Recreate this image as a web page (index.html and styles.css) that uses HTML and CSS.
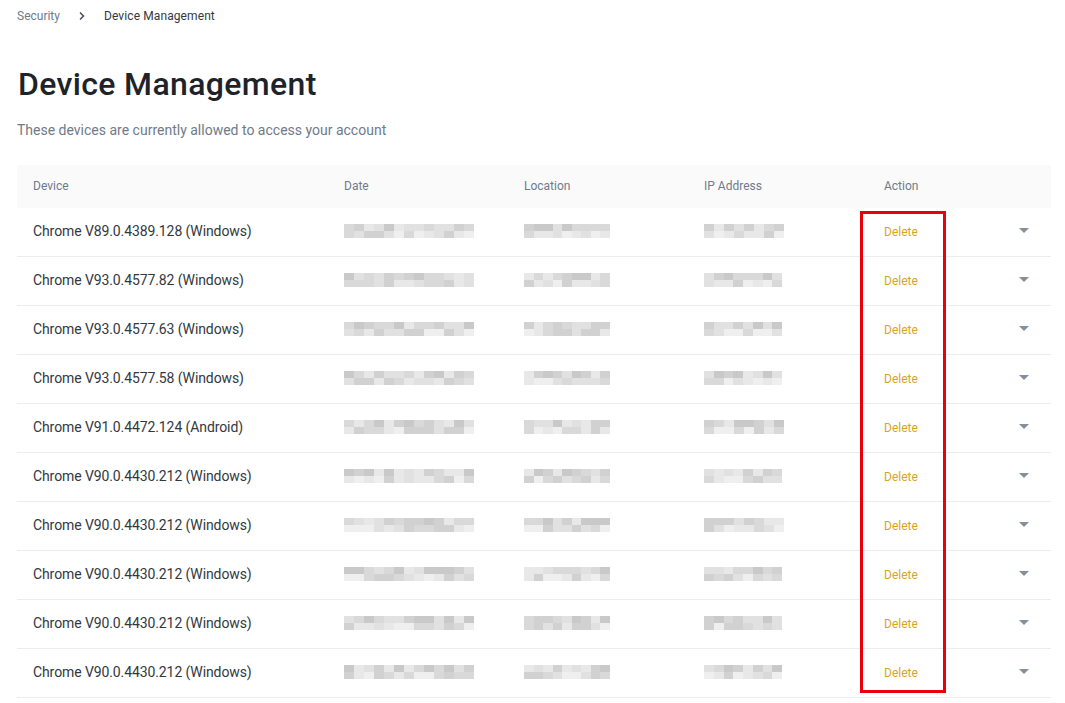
FILE: index.html
```html
<!DOCTYPE html>
<html lang="en">
<head>
<meta charset="utf-8">
<title>Device Management</title>
<link rel="stylesheet" href="styles.css">
</head>
<body>
<div class="page">
  <nav class="crumbs">
    <span class="crumb-link">Security</span>
    <svg class="crumb-sep" width="8" height="10" viewBox="0 0 8 10"><path d="M2 1.5 L5.5 5 L2 8.5" fill="none" stroke="#474d57" stroke-width="1.5"/></svg>
    <span class="crumb-current">Device Management</span>
  </nav>
  <h1 class="title">Device Management</h1>
  <p class="subtitle">These devices are currently allowed to access your account</p>

  <div class="table">
    <div class="row head">
      <div>Device</div><div>Date</div><div>Location</div><div>IP Address</div><div>Action</div><div></div>
    </div>
    <div class="row"><div class="device">Chrome V89.0.4389.128 (Windows)</div><div><span class="blur" data-w="130" data-s="1"></span></div><div><span class="blur" data-w="86" data-s="2"></span></div><div><span class="blur" data-w="80" data-s="3"></span></div><div><span class="del">Delete</span></div><div class="caret-cell"><span class="caret"></span></div></div>
    <div class="row"><div class="device">Chrome V93.0.4577.82 (Windows)</div><div><span class="blur" data-w="130" data-s="4"></span></div><div><span class="blur" data-w="86" data-s="5"></span></div><div><span class="blur" data-w="78" data-s="6"></span></div><div><span class="del">Delete</span></div><div class="caret-cell"><span class="caret"></span></div></div>
    <div class="row"><div class="device">Chrome V93.0.4577.63 (Windows)</div><div><span class="blur" data-w="130" data-s="7"></span></div><div><span class="blur" data-w="86" data-s="8"></span></div><div><span class="blur" data-w="78" data-s="9"></span></div><div><span class="del">Delete</span></div><div class="caret-cell"><span class="caret"></span></div></div>
    <div class="row"><div class="device">Chrome V93.0.4577.58 (Windows)</div><div><span class="blur" data-w="130" data-s="10"></span></div><div><span class="blur" data-w="86" data-s="11"></span></div><div><span class="blur" data-w="78" data-s="12"></span></div><div><span class="del">Delete</span></div><div class="caret-cell"><span class="caret"></span></div></div>
    <div class="row"><div class="device">Chrome V91.0.4472.124 (Android)</div><div><span class="blur" data-w="130" data-s="13"></span></div><div><span class="blur" data-w="86" data-s="14"></span></div><div><span class="blur" data-w="80" data-s="15"></span></div><div><span class="del">Delete</span></div><div class="caret-cell"><span class="caret"></span></div></div>
    <div class="row"><div class="device">Chrome V90.0.4430.212 (Windows)</div><div><span class="blur" data-w="130" data-s="16"></span></div><div><span class="blur" data-w="86" data-s="17"></span></div><div><span class="blur" data-w="78" data-s="18"></span></div><div><span class="del">Delete</span></div><div class="caret-cell"><span class="caret"></span></div></div>
    <div class="row"><div class="device">Chrome V90.0.4430.212 (Windows)</div><div><span class="blur" data-w="130" data-s="19"></span></div><div><span class="blur" data-w="86" data-s="20"></span></div><div><span class="blur" data-w="80" data-s="21"></span></div><div><span class="del">Delete</span></div><div class="caret-cell"><span class="caret"></span></div></div>
    <div class="row"><div class="device">Chrome V90.0.4430.212 (Windows)</div><div><span class="blur" data-w="130" data-s="22"></span></div><div><span class="blur" data-w="86" data-s="23"></span></div><div><span class="blur" data-w="78" data-s="24"></span></div><div><span class="del">Delete</span></div><div class="caret-cell"><span class="caret"></span></div></div>
    <div class="row"><div class="device">Chrome V90.0.4430.212 (Windows)</div><div><span class="blur" data-w="130" data-s="25"></span></div><div><span class="blur" data-w="86" data-s="26"></span></div><div><span class="blur" data-w="78" data-s="27"></span></div><div><span class="del">Delete</span></div><div class="caret-cell"><span class="caret"></span></div></div>
    <div class="row"><div class="device">Chrome V90.0.4430.212 (Windows)</div><div><span class="blur" data-w="130" data-s="28"></span></div><div><span class="blur" data-w="86" data-s="29"></span></div><div><span class="blur" data-w="78" data-s="30"></span></div><div><span class="del">Delete</span></div><div class="caret-cell"><span class="caret"></span></div></div>
    <div class="highlight"></div>
  </div>
</div>
<script src="script.js"></script>
</body>
</html>
```

FILE: styles.css
```css
* { box-sizing: border-box; }
html, body { margin: 0; padding: 0; background: #ffffff; }
body {
  font-family: Roboto, "Liberation Sans", Arial, sans-serif;
  color: #1e2329;
}
.page {
  padding: 0 14px 0 17px;
}
.crumbs {
  height: 32px;
  display: flex;
  align-items: center;
  font-size: 12px;
}
.crumb-link { color: #707a8a; }
.crumb-sep { margin: 0 18px 0 18px; }
.crumb-current { color: #333840; letter-spacing: 0.1px; }

.title {
  margin: 32px 0 0 1px;
  font-size: 32px;
  line-height: 40px;
  font-weight: 500;
  letter-spacing: 0.35px;
  color: #1e2329;
}
.subtitle {
  margin: 16px 0 0;
  font-size: 14px;
  line-height: 20px;
  color: #707a8a;
}

.table {
  position: relative;
  margin-top: 25px;
}
.row {
  display: grid;
  grid-template-columns: 311px 180px 180px 180px 1fr 22px;
  align-items: center;
  padding: 0 16px 3px;
  height: 49px;
  border-bottom: 1px solid #eaecef;
  font-size: 14px;
}
.row.head {
  height: 43px;
  padding-bottom: 2px;
  background: #fafafa;
  border-bottom: none;
  font-size: 12px;
  color: #707a8a;
}
.device {
  color: #333840;
  letter-spacing: -0.1px;
}
.del {
  font-size: 12px;
  color: #d9a41e;
}
.caret-cell {
  display: flex;
  justify-content: center;
}
.caret {
  width: 0;
  height: 0;
  border-left: 5px solid transparent;
  border-right: 5px solid transparent;
  border-top: 5px solid #848e9c;
}
.blur {
  display: grid;
  grid-auto-rows: 7px;
  margin-top: 1px;
}
.blur i { display: block; }

.highlight {
  position: absolute;
  top: 46px;
  left: 843px;
  width: 86px;
  height: 482px;
  border: 3px solid #e8000b;
  pointer-events: none;
}
```

FILE: script.js
```js
(function () {
  function rng(seed) {
    var s = seed * 9301 + 49297;
    return function () {
      s = (s * 9301 + 49297) % 233280;
      return s / 233280;
    };
  }
  var shades = ['#c9c9c9', '#d1d1d1', '#d9d9d9', '#e1e1e1', '#e8e8e8', '#efefef', '#f5f5f5'];
  document.querySelectorAll('.blur').forEach(function (el) {
    var w = parseInt(el.getAttribute('data-w'), 10);
    var r = rng(parseInt(el.getAttribute('data-s'), 10));
    var cols = Math.round(w / 10);
    el.style.gridTemplateColumns = 'repeat(' + cols + ', ' + (w / cols).toFixed(2) + 'px)';
    for (var row = 0; row < 2; row++) {
      for (var c = 0; c < cols; c++) {
        var cell = document.createElement('i');
        var base = row === 0 ? 1 : 2;
        var idx = base + Math.floor(r() * 5) - 1;
        if (idx < 0) idx = 0;
        if (idx > shades.length - 1) idx = shades.length - 1;
        cell.style.background = shades[idx];
        el.appendChild(cell);
      }
    }
  });
})();
```
